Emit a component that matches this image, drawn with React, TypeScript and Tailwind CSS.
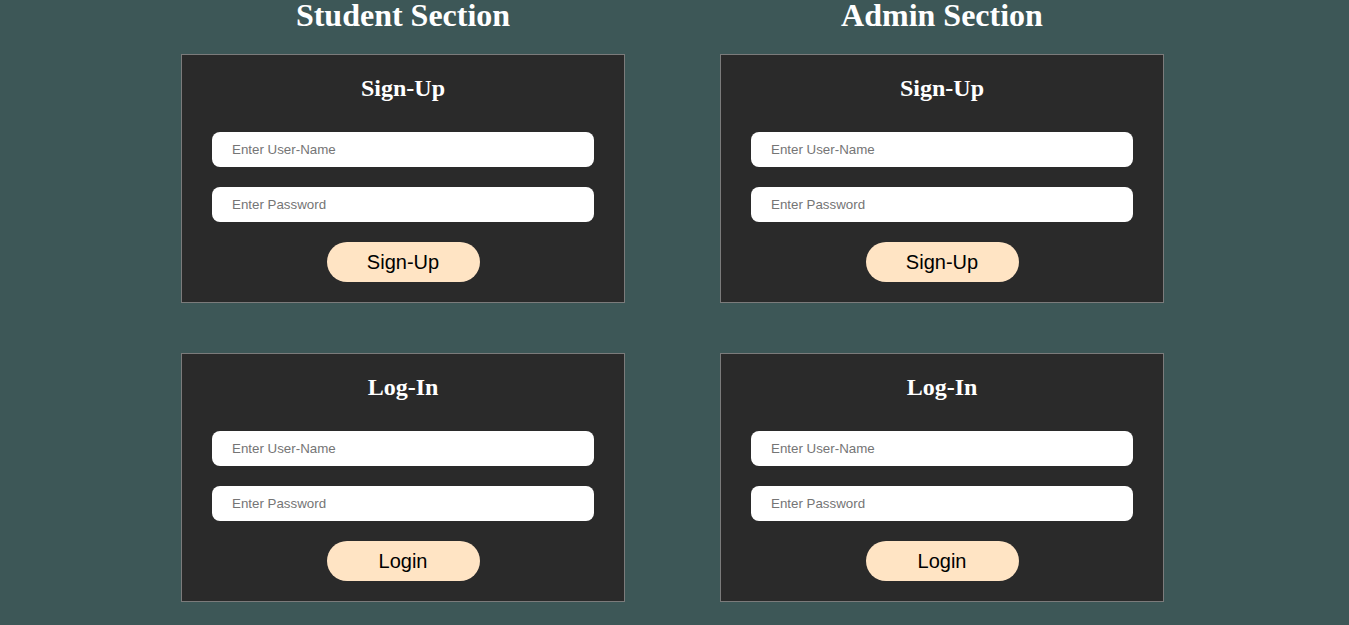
import React from "react";

const serif = { fontFamily: '"Liberation Serif", "Times New Roman", serif' };

function Card({ title, button }: { title: string; button: string }) {
  return (
    <div className="w-[444px] border border-[#7b7b7b] bg-[#2a2a2a] px-[30px] pt-[20px] pb-[20px] flex flex-col items-center">
      <h2
        className="text-[24px] leading-[27px] font-bold text-white text-center"
        style={serif}
      >
        {title}
      </h2>
      <input
        type="text"
        placeholder="Enter User-Name"
        className="mt-[30px] w-full h-[35px] rounded-[8px] bg-white px-[20px] text-[13.33px] text-black placeholder:text-[#757575] outline-none font-['Liberation_Sans',Arial,sans-serif]"
      />
      <input
        type="password"
        placeholder="Enter Password"
        className="mt-[20px] w-full h-[35px] rounded-[8px] bg-white px-[20px] text-[13.33px] text-black placeholder:text-[#757575] outline-none font-['Liberation_Sans',Arial,sans-serif]"
      />
      <button className="mt-[20px] w-[153px] h-[40px] rounded-full bg-[#ffe4c4] text-[20px] text-black font-['Liberation_Sans',Arial,sans-serif]">
        {button}
      </button>
    </div>
  );
}

function Column({ heading }: { heading: string }) {
  return (
    <div className="flex flex-col items-center w-[444px]">
      <h1
        className="text-[32px] leading-[30px] font-bold text-white text-center"
        style={serif}
      >
        {heading}
      </h1>
      <div className="mt-[24px] flex flex-col gap-[50px]">
        <Card title="Sign-Up" button="Sign-Up" />
        <Card title="Log-In" button="Login" />
      </div>
    </div>
  );
}

export default function App() {
  return (
    <div className="w-full h-[625px] bg-[#3d5757] overflow-hidden">
      <div className="flex justify-center gap-[95px] pr-[4px]">
        <Column heading="Student Section" />
        <Column heading="Admin Section" />
      </div>
    </div>
  );
}
